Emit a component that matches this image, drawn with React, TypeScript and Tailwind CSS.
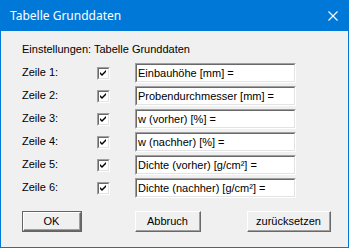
import React from "react";

const rows = [
  { label: "Zeile 1:", value: "Einbauhöhe [mm] =" },
  { label: "Zeile 2:", value: "Probendurchmesser [mm] =" },
  { label: "Zeile 3:", value: "w (vorher) [%] =" },
  { label: "Zeile 4:", value: "w (nachher) [%] =" },
  { label: "Zeile 5:", value: "Dichte (vorher) [g/cm²] =" },
  { label: "Zeile 6:", value: "Dichte (nachher) [g/cm²] =" },
];

function Check() {
  return (
    <div className="w-[13px] h-[13px] border-t border-l border-t-[#a0a0a0] border-l-[#a0a0a0] border-b border-r border-b-white border-r-white">
      <div className="w-full h-full bg-white border-t border-l border-t-[#696969] border-l-[#696969] border-b border-r border-b-[#e3e3e3] border-r-[#e3e3e3] flex items-center justify-center">
        <svg width="9" height="9" viewBox="0 0 9 9">
          <path d="M1 3 L1 5 L3 7 L7 3 L7 1 L3 5 Z" fill="#000" />
        </svg>
      </div>
    </div>
  );
}

function Field({ value }: { value: string }) {
  return (
    <div className="w-[161px] h-[20px] border-t border-l border-t-[#a0a0a0] border-l-[#a0a0a0] border-b border-r border-b-white border-r-white">
      <div className="w-full h-full bg-white border-t border-l border-t-[#696969] border-l-[#696969] border-b border-r border-b-[#e3e3e3] border-r-[#e3e3e3] pl-[1px] flex items-center text-[11px] text-black leading-none">
        {value}
      </div>
    </div>
  );
}

function Button({ label, width, isDefault }: { label: string; width: string; isDefault?: boolean }) {
  return (
    <div className={`${width} h-[21px] ${isDefault ? "border border-[#646464]" : ""}`}>
      <div className="w-full h-full border-t border-l border-t-white border-l-white border-b border-r border-b-[#696969] border-r-[#696969]">
        <div className="w-full h-full bg-[#f0f0f0] border-b border-r border-b-[#a0a0a0] border-r-[#a0a0a0] flex items-center justify-center text-[11px] text-black">
          {label}
        </div>
      </div>
    </div>
  );
}

export default function App() {
  return (
    <div
      className="w-[349px] h-[248px] bg-[#f0f0f0] border border-[#0078d7] flex flex-col overflow-hidden"
      style={{ fontFamily: '"Liberation Sans", Arial, sans-serif' }}
    >
      {/* title bar */}
      <div className="h-[30px] bg-[#0078d7] flex items-center justify-between pl-[9px] pr-[10px] shrink-0">
        <span className="text-white text-[12px]" style={{ fontFamily: '"Noto Sans", sans-serif' }}>
          Tabelle Grunddaten
        </span>
        <svg width="10" height="10" viewBox="0 0 10 10">
          <path d="M0.5 0.5 L9.5 9.5 M9.5 0.5 L0.5 9.5" stroke="#fff" strokeWidth="1.1" />
        </svg>
      </div>

      <div className="pl-[21px] pt-[11px] flex flex-col">
        <div className="h-[14px] flex items-center text-[11px] text-black">Einstellungen: Tabelle Grunddaten</div>

        <div className="mt-[7px] flex flex-col gap-[3px]">
          {rows.map((r) => (
            <div key={r.label} className="flex items-center h-[20px]">
              <span className="w-[75px] text-[11px] text-black -mt-[2px]">{r.label}</span>
              <div className="w-[38px]">
                <Check />
              </div>
              <Field value={r.value} />
            </div>
          ))}
        </div>

        {/* buttons */}
        <div className="mt-[13px] flex items-center">
          <Button label="OK" width="w-[60px]" isDefault />
          <div className="ml-[53px]">
            <Button label="Abbruch" width="w-[66px]" />
          </div>
          <div className="ml-[46px]">
            <Button label="zurücksetzen" width="w-[84px]" />
          </div>
        </div>
      </div>
    </div>
  );
}
